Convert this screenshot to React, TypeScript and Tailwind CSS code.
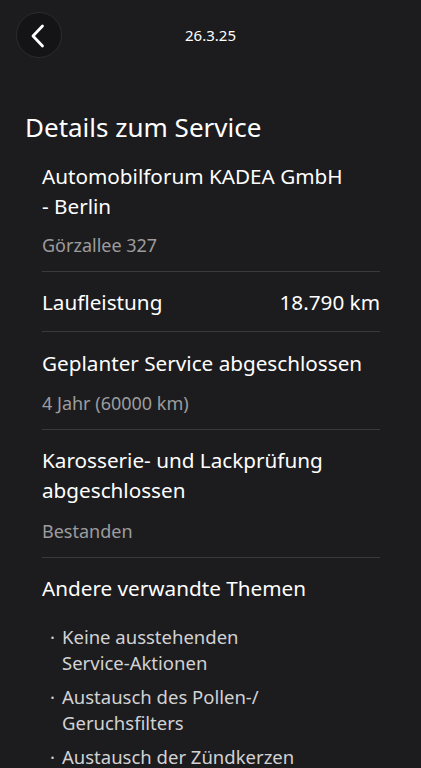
import React from "react";

const font = { fontFamily: '"Noto Sans", "Open Sans", sans-serif' };

function Divider() {
  return <div className="h-px bg-[#3a3a3c] ml-[42px] mr-[41px]" />;
}

export default function App() {
  return (
    <div className="w-[421px] h-[768px] overflow-hidden bg-[#1c1c1e] text-white" style={font}>
      <div className="relative h-[70px] flex items-center justify-center">
        <button className="absolute left-[16px] top-[12px] w-[46px] h-[46px] rounded-full bg-[#141416] border border-[#2c2c2e] flex items-center justify-center">
          <svg width="18" height="24" viewBox="0 0 18 24" fill="none" stroke="white" strokeWidth="2.8" strokeLinecap="round" strokeLinejoin="round" className="mr-[2px] mt-[2px]">
            <path d="M13.5 2 L4 12 L13.5 22" />
          </svg>
        </button>
        <div className="text-[15px] text-white">26.3.25</div>
      </div>
      <div className="pt-[40px] px-[25px] text-[26px] leading-[34px]">Details zum Service</div>
      <div className="pt-[17px]">
        <div className="px-[42px]">
          <div className="text-[20.7px] leading-[30px]">Automobilforum KADEA GmbH<br />- Berlin</div>
          <div className="text-[18px] leading-[24px] text-[#9c9c9e] mt-[12px] mb-[14px]">Görzallee 327</div>
        </div>
        <Divider />
        <div className="px-[42px] flex justify-between text-[20.7px] leading-[30px] pt-[15px] pb-[14px]">
          <span>Laufleistung</span>
          <span className="mr-[-1px]">18.790 km</span>
        </div>
        <Divider />
        <div className="px-[42px] pt-[16px]">
          <div className="text-[20.7px] leading-[30px]">Geplanter Service abgeschlossen</div>
          <div className="text-[18px] leading-[24px] text-[#9c9c9e] mt-[13px] mb-[14px]">4 Jahr (60000 km)</div>
        </div>
        <Divider />
        <div className="px-[42px] pt-[16px]">
          <div className="text-[20.7px] leading-[29.5px]">Karosserie- und Lackprüfung<br />abgeschlossen</div>
          <div className="text-[18px] leading-[24px] text-[#9c9c9e] mt-[14px] mb-[14px]">Bestanden</div>
        </div>
        <Divider />
        <div className="px-[42px] pt-[15px]">
          <div className="text-[20.7px] leading-[30px]">Andere verwandte Themen</div>
          <ul className="mt-[21px] text-[18.5px] leading-[26px] text-[#d2d2d4] flex flex-col gap-[8px]">
            {[
              ["Keine ausstehenden", "Service-Aktionen"],
              ["Austausch des Pollen-/", "Geruchsfilters"],
              ["Austausch der Zündkerzen"],
            ].map((lines, i) => (
              <li key={i} className="flex">
                <span className="w-[20px] pl-[8px] shrink-0">·</span>
                <span>
                  {lines.map((l, j) => (
                    <React.Fragment key={j}>
                      {j > 0 && <br />}
                      {l}
                    </React.Fragment>
                  ))}
                </span>
              </li>
            ))}
          </ul>
        </div>
      </div>
    </div>
  );
}
